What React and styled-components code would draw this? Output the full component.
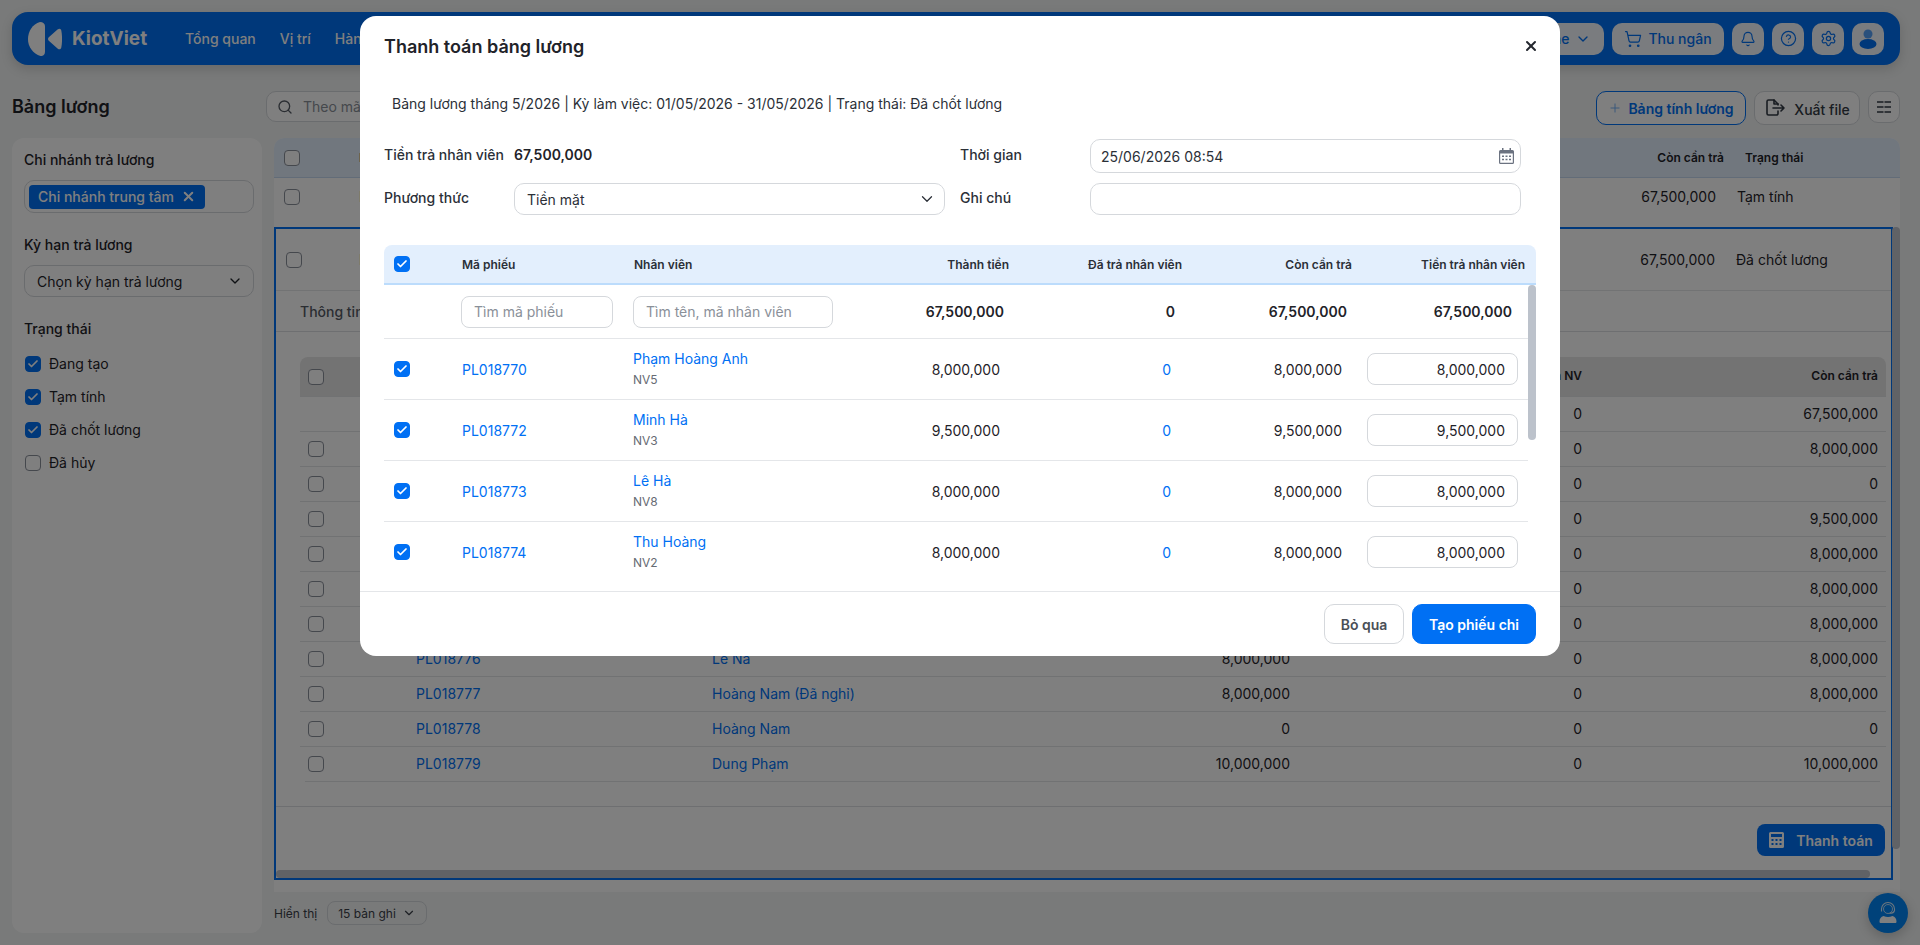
import React from 'react';
import styled, { createGlobalStyle } from 'styled-components';
import { Search, ChevronDown, ShoppingCart, Bell, CircleHelp, Settings, Plus, X, Check } from 'lucide-react';

const GlobalStyle = createGlobalStyle`
  * { box-sizing: border-box; }
  html, body { margin: 0; padding: 0; height: 100%; overflow: hidden; }
  body { font-family: Inter, "Noto Sans", sans-serif; font-size: 14px; color: #1f2329; background: #f2f4f4; }
`;

const Page = styled.div`
  position: relative;
  width: 1920px;
  height: 945px;
  padding: 12px 20px 0 12px;
  overflow: hidden;
  background: #f2f4f4;
`;

/* top bar */
const TopBar = styled.header`
  display: flex;
  align-items: center;
  height: 53px;
  width: 1888px;
  padding: 0 16px;
  background: #0070f4;
  border-radius: 16px;
  box-shadow: 0 4px 12px rgba(0, 0, 0, 0.15);
`;

const Brand = styled.div`
  display: flex;
  align-items: center;
  gap: 10px;
  width: 157px;
  color: #fff;
  font-size: 19px;
  font-weight: 700;
`;

const Nav = styled.nav`
  display: flex;
  gap: 24px;
  color: #fff;
  font-weight: 500;
`;

const BarActions = styled.div`
  display: flex;
  gap: 8px;
  margin-left: auto;
`;

const BarButton = styled.button`
  display: flex;
  align-items: center;
  justify-content: center;
  gap: 6px;
  height: 32px;
  width: ${p => p.$w || 32}px;
  padding: 0;
  border: 0;
  border-radius: 10px;
  background: #f4f8fe;
  color: #0070f4;
  font: 500 14px Inter, sans-serif;
`;

/* title line */
const TitleRow = styled.div`
  display: flex;
  align-items: center;
  height: 34px;
  margin-top: 26px;
`;

const PageTitle = styled.h1`
  width: 254px;
  margin: 0;
  padding-bottom: 4px;
  font-size: 18px;
  font-weight: 600;
`;

const SearchBox = styled.div`
  display: flex;
  align-items: center;
  gap: 10px;
  width: 900px;
  height: 31px;
  margin-bottom: 3px;
  padding: 0 10px;
  background: #fff;
  border: 1px solid #d5d8dc;
  border-radius: 10px;
  color: #8a9099;
`;

const ToolActions = styled.div`
  display: flex;
  align-items: flex-start;
  gap: 8px;
  margin-left: auto;
`;

const ToolButton = styled.button`
  display: flex;
  align-items: center;
  justify-content: center;
  gap: 6px;
  width: ${p => p.$w}px;
  height: ${p => p.$h || 34}px;
  padding: 0;
  background: #fff;
  border: 1px solid ${p => (p.$primary ? '#0070f4' : '#d5d8dc')};
  border-radius: 10px;
  color: ${p => (p.$primary ? '#0070f4' : '#333a44')};
  font: ${p => (p.$primary ? 600 : 500)} 14px Inter, sans-serif;
`;

const LowText = styled.span`
  margin-top: 3px;
`;

const FaintIcon = styled.span`
  display: flex;
  opacity: 0.6;
`;

/* page body */
const Body = styled.div`
  display: flex;
  gap: 12px;
  margin-top: 13px;
`;

const Sidebar = styled.aside`
  width: 250px;
  height: 795px;
  padding: 12px 8px 12px 12px;
  background: #fff;
  border-radius: 12px;
`;

const FilterLabel = styled.div`
  height: 20px;
  line-height: 20px;
  margin-bottom: ${p => p.$gap || 10}px;
  font-weight: 500;
`;

const TagField = styled.div`
  display: flex;
  align-items: center;
  height: 33px;
  padding: 0 4px;
  margin-bottom: 22px;
  border: 1px solid #d5d8dc;
  border-radius: 10px;
`;

const Tag = styled.span`
  display: flex;
  align-items: center;
  gap: 7px;
  height: 24px;
  padding: 0 9px;
  background: #0070f4;
  border-radius: 4px;
  color: #fff;
  font-weight: 500;
`;

const SelectField = styled.div`
  display: flex;
  align-items: center;
  justify-content: space-between;
  height: 32px;
  padding: 0 10px 0 12px;
  margin-bottom: 22px;
  border: 1px solid #d5d8dc;
  border-radius: 10px;
`;

const CheckRow = styled.div`
  display: flex;
  align-items: center;
  gap: 8px;
  height: 33px;
  padding-left: 1px;
`;

const Box = styled.span`
  display: inline-flex;
  flex: none;
  align-items: center;
  justify-content: center;
  width: 16px;
  height: 16px;
  border-radius: 4px;
  color: #fff;
  background: ${p => (p.$on ? '#0070f4' : '#fff')};
  border: 1.5px solid ${p => (p.$on ? '#0070f4' : '#8a909a')};
`;

const Main = styled.main`
  width: 1626px;
`;

const Card = styled.section`
  position: relative;
  height: 754px;
  background: #fff;
  border-radius: 10px 10px 0 0;
`;

const SummaryHead = styled.div`
  display: grid;
  grid-template-columns: 75px 1fr 150px 155px;
  align-items: center;
  height: 40px;
  padding-left: 10px;
  background: #e3effd;
  border-bottom: 1px solid #c5d9f0;
  border-radius: 10px 10px 0 0;
  font-size: 12px;
  font-weight: 600;
`;

const SummaryRow = styled.div`
  display: grid;
  grid-template-columns: ${p => (p.$boxed ? '73px' : '75px')} 1fr 150px 155px;
  align-items: center;
  height: ${p => p.$h}px;
  padding: 0 ${p => (p.$boxed ? 0 : 8)}px ${p => p.$drop || 0}px 10px;
`;

const RightCell = styled.div`
  text-align: right;
  padding-right: 21px;
`;

const Selected = styled.div`
  position: relative;
  width: 1619px;
  height: 653px;
  border: 2px solid #0070f4;
  overflow: hidden;
`;

const Tabs = styled.div`
  display: flex;
  align-items: center;
  height: 42px;
  padding-left: 24px;
  border-top: 1px solid #e4e6e9;
  border-bottom: 1px solid #dcdfe3;
  color: #555b65;
  font-weight: 500;
`;

const InnerTable = styled.div`
  margin: 25px 0 0 24px;
  width: 1586px;
`;

const InnerRow = styled.div`
  display: grid;
  grid-template-columns: 108px 296px 289px 289px 292px 296px;
  align-items: center;
  height: ${p => (p.$head ? 40 : 35)}px;
  padding-left: 8px;
  background: ${p => (p.$head ? '#e6e6e6' : 'transparent')};
  border-bottom: 1px solid ${p => (p.$last ? 'transparent' : '#e2e4e7')};
  font-weight: ${p => (p.$head ? 600 : 400)};
  border-radius: ${p => (p.$head ? '8px 8px 0 0' : '0')};
  font-size: ${p => (p.$head ? 12 : 14)}px;
`;

const InnerLink = styled.span`
  margin-top: -2px;
  color: #0070f4;
`;

const InnerNum = styled.span`
  margin-top: -2px;
  text-align: right;
`;

const EndLine = styled.div`
  height: 1px;
  margin: -1px 6px 0 5px;
  background: #e2e4e7;
`;

const PayBar = styled.div`
  display: flex;
  justify-content: flex-end;
  margin-top: 24px;
  padding: 17px 6px 0 0;
  border-top: 1px solid #dcdfe3;
`;

const PayButton = styled.button`
  display: flex;
  align-items: center;
  justify-content: center;
  gap: 12px;
  width: 128px;
  height: 32px;
  padding: 0;
  border: 0;
  border-radius: 8px;
  background: #0070f4;
  color: #fff;
  font: 600 14px Inter, sans-serif;
`;

const ThumbY = styled.div`
  position: absolute;
  top: 89px;
  right: 0;
  width: 8px;
  height: 622px;
  border-radius: 4px;
  background: #c0c4cc;
`;

const ThumbX = styled.div`
  position: absolute;
  left: 0;
  bottom: 0;
  width: 1594px;
  height: 8px;
  border-radius: 4px;
  background: #c0c4cc;
`;

const FooterBar = styled.div`
  display: flex;
  align-items: center;
  gap: 10px;
  height: 40px;
  padding-top: 2px;
  font-size: 12px;
  color: #3b4048;
`;

const PageSize = styled.div`
  display: flex;
  align-items: center;
  justify-content: space-between;
  width: 100px;
  height: 24px;
  padding: 0 10px;
  border: 1px solid #d5d8dc;
  border-radius: 8px;
`;

const HelpBubble = styled.div`
  position: absolute;
  left: 1868px;
  top: 893px;
  display: flex;
  align-items: center;
  justify-content: center;
  width: 40px;
  height: 40px;
  border-radius: 50%;
  background: #0084f4;
  box-shadow: 0 4px 12px rgba(0, 0, 0, 0.2);
`;

/* dialog */
const Backdrop = styled.div`
  position: absolute;
  inset: 0;
  background: rgba(0, 0, 0, 0.5);
`;

const Dialog = styled.div`
  position: absolute;
  top: 16px;
  left: 360px;
  display: flex;
  flex-direction: column;
  width: 1200px;
  height: 640px;
  background: #fff;
  border-radius: 16px;
  overflow: hidden;
`;

const DialogHead = styled.div`
  display: flex;
  align-items: center;
  justify-content: space-between;
  height: 60px;
  padding: 0 21px 0 24px;
`;

const DialogTitle = styled.h2`
  margin: 0;
  font-size: 18px;
  font-weight: 600;
  color: #1f2329;
`;

const CloseMark = styled.span`
  display: flex;
  color: #23272e;
`;

const Info = styled.div`
  height: 56px;
  padding: 0 32px;
  line-height: 56px;
  color: #2b3038;
`;

const FormGrid = styled.div`
  display: grid;
  grid-template-columns: 130px 431px 145px 431px;
  grid-template-rows: 34px 32px;
  row-gap: 10px;
  align-items: center;
  margin-top: 7px;
  padding: 0 24px;
`;

const FormLabel = styled.label`
  padding-left: ${p => p.$inset || 0}px;
  margin-top: -4px;
  font-weight: 500;
  color: #2b3038;
`;

const FormValue = styled.div`
  margin-top: -4px;
  font-weight: 600;
`;

const Control = styled.div`
  display: flex;
  align-items: center;
  justify-content: space-between;
  height: 100%;
  padding: 0 ${p => p.$right || 8}px 0 ${p => p.$left || 12}px;
  border: 1px solid #d5d8dc;
  border-radius: 10px;
  color: #2b3038;
`;

const PayGrid = styled.div`
  display: grid;
  grid-template-columns: 78px 171px 227px 150px 172px 170px 176px;
  align-items: center;
`;

const PayHead = styled(PayGrid)`
  height: 40px;
  margin: 30px 24px 0;
  background: #e3effd;
  border-bottom: 2px solid #bcdcfc;
  border-radius: 8px 8px 0 0;
  font-size: 12px;
  font-weight: 600;
  color: #2b3038;
`;

const PayBody = styled.div`
  position: relative;
  height: 306px;
  margin: 0 24px;
  overflow: hidden;
`;

const PayRow = styled(PayGrid)`
  width: 1144px;
  height: ${p => p.$h || 61}px;
  border-bottom: 1px solid ${p => (p.$last ? 'transparent' : '#e4e6e9')};
`;

const CheckCell = styled.div`
  display: flex;
  padding-left: 10px;
`;

const HeadName = styled.span`
  padding-left: 1px;
`;

const Num = styled.div`
  text-align: right;
  padding-right: ${p => p.$pad || 0}px;
  font-weight: ${p => (p.$bold ? 600 : 'inherit')};
  color: ${p => (p.$link ? '#0070f4' : 'inherit')};
`;

const FilterInput = styled.div`
  display: flex;
  align-items: center;
  width: ${p => p.$w}px;
  height: 32px;
  padding: 0 12px;
  margin-left: ${p => p.$nudge || 0}px;
  border: 1px solid #d5d8dc;
  border-radius: 8px;
  color: #8a9099;
`;

const LinkText = styled.div`
  color: #0070f4;
`;

const NameCell = styled.div`
  margin-top: -2px;
`;

const SubText = styled.div`
  margin-top: 5px;
  font-size: 12px;
  color: #666b73;
`;

const AmountInput = styled.div`
  display: flex;
  align-items: center;
  justify-content: flex-end;
  width: 151px;
  height: 32px;
  margin-left: 15px;
  padding-right: 12px;
  border: 1px solid #d5d8dc;
  border-radius: 8px;
`;

const PayThumb = styled.div`
  position: absolute;
  top: 0;
  right: 0;
  width: 8px;
  height: 155px;
  border-radius: 4px;
  background: #bcc2cb;
`;

const DialogFoot = styled.div`
  display: flex;
  justify-content: flex-end;
  gap: 8px;
  flex: 1;
  padding: 12px 24px 0;
  border-top: 1px solid #e4e6e9;
`;

const FootButton = styled.button`
  width: ${p => p.$w}px;
  height: 40px;
  padding: 0;
  background: ${p => (p.$primary ? '#0070f4' : '#fff')};
  border: 1px solid ${p => (p.$primary ? '#0070f4' : '#d5d8dc')};
  border-radius: 10px;
  color: ${p => (p.$primary ? '#fff' : '#4a4f57')};
  font: 600 14px Inter, sans-serif;
`;

const Tick = () => <Check size={12} strokeWidth={3.5} />;

const Logo = () => (
  <svg width="34" height="34" viewBox="0 0 34 34" fill="#fff">
    <path d="M12 0C4.500 2 0 9.500 0 17c0 8 5 14.500 12.500 17 3 .3 4.500-1.500 4.500-4.500V4.500C17 1.500 15 0 12 0Z" />
    <path d="M20.800 15.200 29.500 7.600c2-1.600 3.400-.8 3.800 1 1 5.500 1 11.300 0 16.800-.4 1.800-1.800 2.600-3.800 1l-8.700-7.600c-1-1-1-2.600 0-3.600Z" />
  </svg>
);

const ExportIcon = () => (
  <svg width="24" height="20" viewBox="0 0 24 20" fill="none" stroke="currentColor" strokeWidth="1.6" strokeLinecap="round" strokeLinejoin="round">
    <path d="M14 7V6L10 2H4.500A1.500 1.500 0 0 0 3 3.500v12A1.500 1.500 0 0 0 4.500 17h8a1.500 1.500 0 0 0 1.500-1.500V13" />
    <path d="M10 2v4h4M9 10h11M17 7l3 3-3 3" />
  </svg>
);

const ColumnsIcon = () => (
  <svg width="16" height="14" viewBox="0 0 16 14" stroke="currentColor" strokeWidth="1.6">
    <path d="M1 2h6.500M1 7h6.500M1 12h6.500M8.500 2H15M8.500 7H15M8.500 12H15" />
  </svg>
);

const CalendarIcon = () => (
  <svg width="15" height="16" viewBox="0 0 15 16" fill="#6b7280">
    <path d="M3 0h1.500v2h6V0H12v2h1.500A1.500 1.500 0 0 1 15 3.500v11a1.500 1.500 0 0 1-1.500 1.500h-12A1.500 1.500 0 0 1 0 14.500v-11A1.500 1.500 0 0 1 1.500 2H3Z" />
    <path fill="#fff" d="M1.200 5.500h12.600v9a.3.3 0 0 1-.3.3h-12a.3.3 0 0 1-.3-.3Z" />
    <path d="M3 7.500h2v1.500H3zM6.500 7.500h2v1.500h-2zM10 7.500h2v1.500h-2zM3 10.700h2v1.500H3zM6.500 10.700h2v1.500h-2zM10 10.700h2v1.500h-2z" />
  </svg>
);

const CalculatorIcon = () => (
  <svg width="15" height="16" viewBox="0 0 15 16" fill="#fff">
    <path fillRule="evenodd" d="M1.500 0h12A1.500 1.500 0 0 1 15 1.500v13a1.500 1.500 0 0 1-1.500 1.500h-12A1.500 1.500 0 0 1 0 14.500v-13A1.500 1.500 0 0 1 1.500 0Zm.5 2v3h11V2ZM2.500 7v2h2V7Zm4 0v2h2V7Zm4 0v2h2V7Zm-8 4v2h2v-2Zm4 0v2h2v-2Zm4 0v2h2v-2Z" />
  </svg>
);

const AvatarIcon = () => (
  <svg width="20" height="20" viewBox="0 0 20 20" fill="#0070f4">
    <circle cx="10" cy="5" r="4.500" opacity=".65" />
    <ellipse cx="10" cy="15" rx="8.500" ry="5" />
  </svg>
);

const AgentIcon = () => (
  <svg width="22" height="24" viewBox="0 0 22 24" fill="none">
    <circle cx="11" cy="8" r="4.500" stroke="#fff" strokeWidth="1" opacity=".7" />
    <path stroke="#fff" strokeWidth="1.100" opacity=".85" d="M4.500 10.500V8a6.500 6.500 0 0 1 13 0v1.500c-.5 2-2.500 2.800-5 2.800" />
    <path fill="#fff" d="M6.500 15c3 1.200 6 1.200 9 0 2.500.8 4 2.800 4 5.500 0 1-.5 1.500-1.500 1.500H4c-1 0-1.500-.5-1.500-1.500 0-2.700 1.500-4.700 4-5.500Z" />
  </svg>
);

const payRows = [
  ['PL018770', 'Phạm Hoàng Anh', 'NV5', '8,000,000'],
  ['PL018772', 'Minh Hà', 'NV3', '9,500,000'],
  ['PL018773', 'Lê Hà', 'NV8', '8,000,000'],
  ['PL018774', 'Thu Hoàng', 'NV2', '8,000,000'],
];

const slipRows = [
  ['PL018770', 'Phạm Hoàng Anh', '8,000,000', '8,000,000'],
  ['PL018771', 'Hải Nam', '0', '0'],
  ['PL018772', 'Minh Hà', '9,500,000', '9,500,000'],
  ['PL018773', 'Lê Hà', '8,000,000', '8,000,000'],
  ['PL018774', 'Thu Hoàng', '8,000,000', '8,000,000'],
  ['PL018775', 'Hoàng Anh', '8,000,000', '8,000,000'],
  ['PL018776', 'Lê Na', '8,000,000', '8,000,000'],
  ['PL018777', 'Hoàng Nam (Đã nghỉ)', '8,000,000', '8,000,000'],
  ['PL018778', 'Hoàng Nam', '0', '0'],
  ['PL018779', 'Dung Phạm', '10,000,000', '10,000,000'],
];

export default function App() {
  return (
    <Page>
      <GlobalStyle />
      <TopBar>
        <Brand><Logo />KiotViet</Brand>
        <Nav>
          <span>Tổng quan</span>
          <span>Vị trí</span>
          <span>Hàng hóa</span>
        </Nav>
        <BarActions>
          <BarButton $w={90}>Online<ChevronDown size={16} /></BarButton>
          <BarButton $w={112}><ShoppingCart size={18} strokeWidth={1.6} />Thu ngân</BarButton>
          <BarButton><Bell size={16} strokeWidth={1.7} /></BarButton>
          <BarButton><CircleHelp size={17} strokeWidth={1.7} /></BarButton>
          <BarButton><Settings size={17} strokeWidth={1.7} /></BarButton>
          <BarButton><AvatarIcon /></BarButton>
        </BarActions>
      </TopBar>

      <TitleRow>
        <PageTitle>Bảng lương</PageTitle>
        <SearchBox><Search size={16} color="#555b65" />Theo mã phiếu lương</SearchBox>
        <ToolActions>
          <ToolButton $primary $w={150}><FaintIcon><Plus size={14} strokeWidth={1.5} /></FaintIcon>Bảng tính lương</ToolButton>
          <ToolButton $w={106}><ExportIcon /><LowText>Xuất file</LowText></ToolButton>
          <ToolButton $w={32} $h={32}><ColumnsIcon /></ToolButton>
        </ToolActions>
      </TitleRow>

      <Body>
        <Sidebar>
          <FilterLabel>Chi nhánh trả lương</FilterLabel>
          <TagField><Tag>Chi nhánh trung tâm <X size={15} strokeWidth={3.2} /></Tag></TagField>
          <FilterLabel>Kỳ hạn trả lương</FilterLabel>
          <SelectField>Chọn kỳ hạn trả lương<ChevronDown size={16} /></SelectField>
          <FilterLabel $gap={8}>Trạng thái</FilterLabel>
          <CheckRow><Box $on><Tick /></Box>Đang tạo</CheckRow>
          <CheckRow><Box $on><Tick /></Box>Tạm tính</CheckRow>
          <CheckRow><Box $on><Tick /></Box>Đã chốt lương</CheckRow>
          <CheckRow><Box />Đã hủy</CheckRow>
        </Sidebar>

        <Main>
          <Card>
            <SummaryHead>
              <Box />
              <span>Mã bảng lương</span>
              <RightCell>Còn cần trả</RightCell>
              <span>Trạng thái</span>
            </SummaryHead>
            <SummaryRow $h={49} $drop={12}>
              <Box />
              <span>BL000012</span>
              <RightCell>67,500,000</RightCell>
              <span>Tạm tính</span>
            </SummaryRow>
            <Selected>
              <SummaryRow $boxed $h={61}>
                <Box />
                <span>BL000011</span>
                <RightCell>67,500,000</RightCell>
                <span>Đã chốt lương</span>
              </SummaryRow>
              <Tabs>Thông tin</Tabs>
              <InnerTable>
                <InnerRow $head>
                  <Box />
                  <span>Mã phiếu</span>
                  <span>Nhân viên</span>
                  <InnerNum>Thành tiền</InnerNum>
                  <InnerNum>Đã trả NV</InnerNum>
                  <InnerNum>Còn cần trả</InnerNum>
                </InnerRow>
                <InnerRow>
                  <span />
                  <span />
                  <span />
                  <InnerNum>67,500,000</InnerNum>
                  <InnerNum>0</InnerNum>
                  <InnerNum>67,500,000</InnerNum>
                </InnerRow>
                {slipRows.map((r, i) => (
                  <InnerRow key={r[0]} $last={i === slipRows.length - 1}>
                    <Box />
                    <InnerLink>{r[0]}</InnerLink>
                    <InnerLink>{r[1]}</InnerLink>
                    <InnerNum>{r[2]}</InnerNum>
                    <InnerNum>0</InnerNum>
                    <InnerNum>{r[3]}</InnerNum>
                  </InnerRow>
                ))}
                <EndLine />
              </InnerTable>
              <PayBar>
                <PayButton><CalculatorIcon />Thanh toán</PayButton>
              </PayBar>
              <ThumbX />
            </Selected>
            <ThumbY />
          </Card>
          <FooterBar>
            Hiển thị
            <PageSize>15 bản ghi<ChevronDown size={14} /></PageSize>
          </FooterBar>
        </Main>
      </Body>
      <HelpBubble><AgentIcon /></HelpBubble>

      <Backdrop />
      <Dialog>
        <DialogHead>
          <DialogTitle>Thanh toán bảng lương</DialogTitle>
          <CloseMark><X size={16} strokeWidth={3} /></CloseMark>
        </DialogHead>
        <Info>Bảng lương tháng 5/2026 | Kỳ làm việc: 01/05/2026 - 31/05/2026 | Trạng thái: Đã chốt lương</Info>
        <FormGrid>
          <FormLabel>Tiền trả nhân viên</FormLabel>
          <FormValue>67,500,000</FormValue>
          <FormLabel $inset={15}>Thời gian</FormLabel>
          <Control $left={10} $right={6}>25/06/2026 08:54<CalendarIcon /></Control>
          <FormLabel>Phương thức</FormLabel>
          <Control>Tiền mặt<ChevronDown size={18} strokeWidth={1.7} /></Control>
          <FormLabel $inset={15}>Ghi chú</FormLabel>
          <Control />
        </FormGrid>
        <PayHead>
          <CheckCell><Box $on><Tick /></Box></CheckCell>
          <span>Mã phiếu</span>
          <HeadName>Nhân viên</HeadName>
          <Num $pad={1}>Thành tiền</Num>
          <Num>Đã trả nhân viên</Num>
          <Num>Còn cần trả</Num>
          <Num $pad={3}>Tiền trả nhân viên</Num>
        </PayHead>
        <PayBody>
          <PayRow $h={54}>
            <span />
            <FilterInput $w={152} $nudge={-1}>Tìm mã phiếu</FilterInput>
            <FilterInput $w={200}>Tìm tên, mã nhân viên</FilterInput>
            <Num $bold $pad={6}>67,500,000</Num>
            <Num $bold $pad={7}>0</Num>
            <Num $bold $pad={5}>67,500,000</Num>
            <Num $bold $pad={16}>67,500,000</Num>
          </PayRow>
          {payRows.map((r, i) => (
            <PayRow key={r[0]} $last={i === payRows.length - 1}>
              <CheckCell><Box $on><Tick /></Box></CheckCell>
              <LinkText>{r[0]}</LinkText>
              <NameCell>
                <LinkText>{r[1]}</LinkText>
                <SubText>{r[2]}</SubText>
              </NameCell>
              <Num $pad={10}>{r[3]}</Num>
              <Num $link $pad={11}>0</Num>
              <Num $pad={10}>{r[3]}</Num>
              <AmountInput>{r[3]}</AmountInput>
            </PayRow>
          ))}
          <PayThumb />
        </PayBody>
        <DialogFoot>
          <FootButton $w={80}>Bỏ qua</FootButton>
          <FootButton $primary $w={124}>Tạo phiếu chi</FootButton>
        </DialogFoot>
      </Dialog>
    </Page>
  );
}
